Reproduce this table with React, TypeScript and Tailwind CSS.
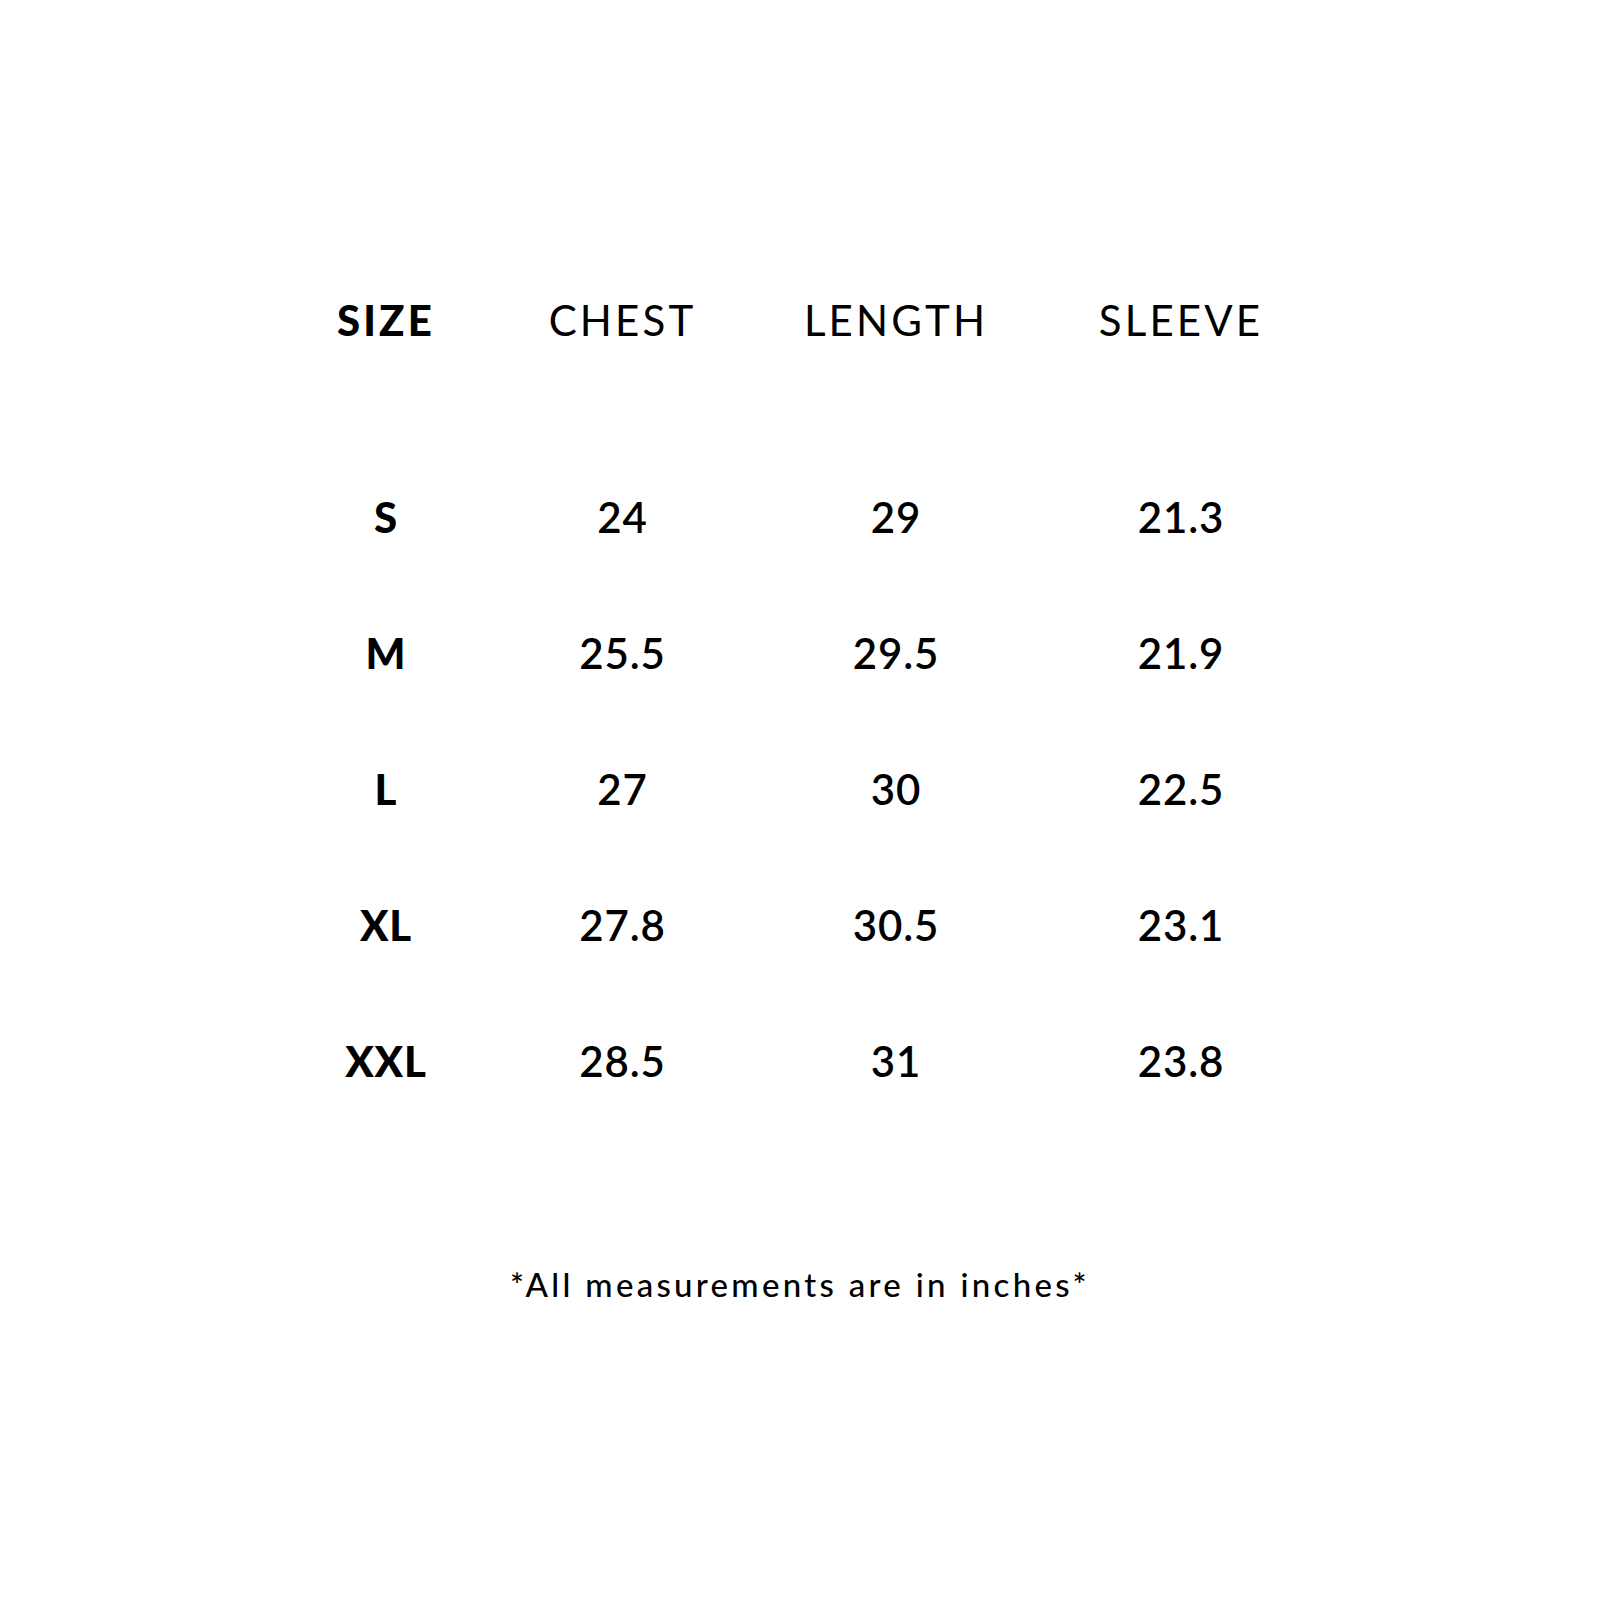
const columns = ["SIZE", "CHEST", "LENGTH", "SLEEVE"];

const rows = [
  ["S", "24", "29", "21.3"],
  ["M", "25.5", "29.5", "21.9"],
  ["L", "27", "30", "22.5"],
  ["XL", "27.8", "30.5", "23.1"],
  ["XXL", "28.5", "31", "23.8"],
];

const grid = "grid grid-cols-[236px_237px_310px_260px] items-center text-center";

export default function App() {
  return (
    <div className="min-h-[1600px] w-[1600px] bg-white font-['Lato',sans-serif] text-black">
      <div className="pl-[268px] pt-[252px]">
        <div className={`${grid} h-[136px] text-[42px] leading-none tracking-[0.075em]`}>
          {columns.map((c, i) => (
            <div key={c} className={i === 0 ? "font-black" : "font-normal"}>
              {c}
            </div>
          ))}
        </div>
        <div className="mt-[61px]">
          {rows.map((r) => (
            <div key={r[0]} className={`${grid} h-[136px] text-[42px] leading-none tracking-[0.02em]`}>
              {r.map((v, i) => (
                <div key={i} className={i === 0 ? "font-black" : "font-semibold"}>
                  {v}
                </div>
              ))}
            </div>
          ))}
        </div>
      </div>
      <p className="mt-[135px] text-center text-[33px] leading-[40px] font-medium tracking-[0.1em]">
        *All measurements are in inches*
      </p>
    </div>
  );
}
